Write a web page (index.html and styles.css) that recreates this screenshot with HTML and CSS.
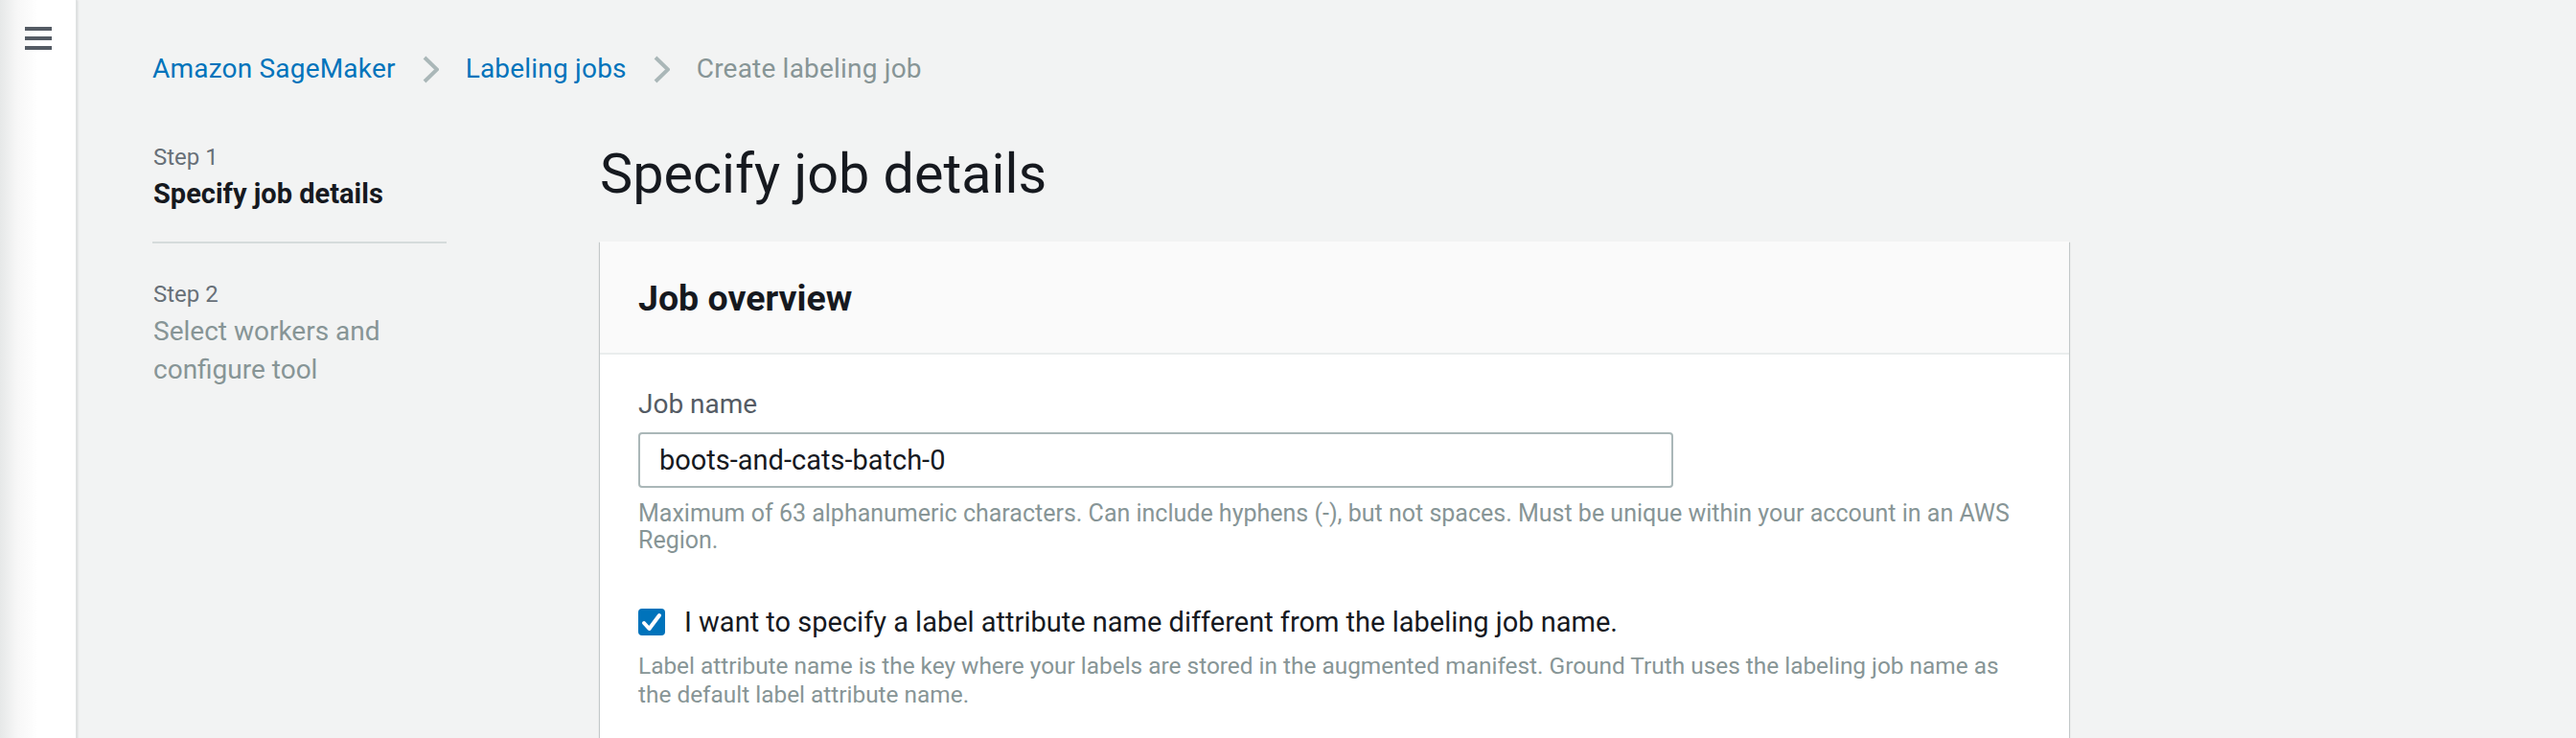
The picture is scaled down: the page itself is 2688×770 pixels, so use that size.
FILE: index.html
```html
<!DOCTYPE html>
<html lang="en">
<head>
<meta charset="utf-8">
<title>Create labeling job</title>
<link rel="stylesheet" href="styles.css">
</head>
<body>
<div class="app">
  <aside class="sidenav">
    <svg class="menu-icon" width="28" height="24" viewBox="0 0 28 24" aria-label="Menu">
      <rect x="0" y="0" width="28" height="4" fill="#545b64"/>
      <rect x="0" y="10" width="28" height="4" fill="#545b64"/>
      <rect x="0" y="20" width="28" height="4" fill="#545b64"/>
    </svg>
  </aside>
  <main class="main">
    <nav class="breadcrumbs">
      <a class="crumb-link" href="#">Amazon SageMaker</a>
      <svg class="crumb-sep" width="17" height="29" viewBox="0 0 17 29"><polyline points="2,2 15,14.5 2,27" fill="none" stroke="#aab7b8" stroke-width="4"/></svg>
      <a class="crumb-link" href="#">Labeling jobs</a>
      <svg class="crumb-sep" width="17" height="29" viewBox="0 0 17 29"><polyline points="2,2 15,14.5 2,27" fill="none" stroke="#aab7b8" stroke-width="4"/></svg>
      <span class="crumb-current">Create labeling job</span>
    </nav>
    <div class="layout">
      <ol class="steps">
        <li class="step step-active">
          <div class="step-label">Step 1</div>
          <div class="step-title">Specify job details</div>
        </li>
        <li class="step">
          <div class="step-label">Step 2</div>
          <div class="step-title step-title-disabled">Select workers and<br>configure tool</div>
        </li>
      </ol>
      <section class="content">
        <h1 class="page-title">Specify job details</h1>
        <div class="card">
          <div class="card-header">
            <h2 class="card-title">Job overview</h2>
          </div>
          <div class="card-body">
            <div class="field">
              <label class="field-label" for="jobname">Job name</label>
              <div class="input">boots-and-cats-batch-0</div>
              <p class="help">Maximum of 63 alphanumeric characters. Can include hyphens (-), but not spaces. Must be unique within your account in an AWS Region.</p>
            </div>
            <div class="check-field">
              <div class="check-row">
                <span class="checkbox">
                  <svg width="28" height="28" viewBox="0 0 28 28"><polyline points="6,15 11.5,21 22,7" fill="none" stroke="#fff" stroke-width="4" stroke-linecap="round" stroke-linejoin="round"/></svg>
                </span>
                <span class="check-label">I want to specify a label attribute name different from the labeling job name.</span>
              </div>
              <p class="help help-check">Label attribute name is the key where your labels are stored in the augmented manifest. Ground Truth uses the labeling job name as the default label attribute name.</p>
            </div>
          </div>
        </div>
      </section>
    </div>
  </main>
</div>
</body>
</html>
```
FILE: styles.css
```css
* { box-sizing: border-box; }
html, body {
  margin: 0;
  padding: 0;
  height: 100%;
}
body {
  background: #f2f3f3;
  font-family: Roboto, "Liberation Sans", Arial, sans-serif;
  color: #16191f;
  overflow: hidden;
}
.app {
  display: flex;
  min-height: 770px;
}
.sidenav {
  width: 80px;
  flex: 0 0 80px;
  min-height: 770px;
  background: linear-gradient(90deg, #e6e8e8 0, #f7f7f7 18px, #fff 40px);
  border-right: 1px solid #dfe2e2;
  box-shadow: 1px 0 2px rgba(0, 28, 36, 0.12);
  padding: 28px 0 0 26px;
}
.menu-icon { display: block; }
.main {
  flex: 1;
  padding: 52px 0 0 79px;
}
.breadcrumbs {
  display: flex;
  align-items: center;
  gap: 28px;
  font-size: 28px;
  letter-spacing: 0.2px;
  line-height: 40px;
  height: 40px;
}
.crumb-link {
  color: #0073bb;
  text-decoration: none;
}
.crumb-sep { display: block; }
.crumb-current { color: #879596; }
.layout {
  display: grid;
  grid-template-columns: 307px 1533px;
  column-gap: 160px;
  margin-top: 56px;
}
.steps {
  list-style: none;
  margin: 0;
  padding: 0;
}
.step {
  padding: 0 0 0 1px;
}
.step-active {
  padding-bottom: 30px;
  border-bottom: 2px solid #d5dbdb;
  margin-bottom: 37px;
}
.step-label {
  font-size: 24px;
  line-height: 32px;
  color: #687078;
  margin-bottom: 2px;
}
.step-title {
  font-size: 29px;
  line-height: 40px;
  font-weight: 700;
  color: #16191f;
}
.step-title-disabled {
  font-size: 28px;
  font-weight: 400;
  color: #879596;
  line-height: 40px;
  padding-top: 1px;
}
.content { min-width: 0; }
.page-title {
  margin: 2px 0 38px 0;
  font-size: 57.5px;
  line-height: 64px;
  font-weight: 400;
  color: #16191f;
}
.card {
  background: #fff;
  box-shadow: 0 1px 1px 0 rgba(0, 28, 36, 0.3), 1px 1px 1px 0 rgba(0, 28, 36, 0.15), -1px 1px 1px 0 rgba(0, 28, 36, 0.15);
}
.card-header {
  background: #fafafa;
  border-bottom: 2px solid #eaeded;
  height: 118px;
  padding: 37px 40px 0 40px;
}
.card-title {
  margin: 0;
  font-size: 37.5px;
  line-height: 44px;
  font-weight: 700;
  color: #16191f;
}
.card-body {
  padding: 32px 40px 40px 40px;
}
.field-label {
  display: block;
  font-size: 28px;
  line-height: 40px;
  color: #545b64;
}
.input {
  margin-top: 9px;
  width: 1080px;
  height: 58px;
  border: 2px solid #aab7b8;
  border-radius: 4px;
  padding: 0 20px;
  font-size: 29px;
  line-height: 54px;
  color: #16191f;
}
.help {
  margin: 13px 0 0 0;
  font-size: 25px;
  line-height: 28px;
  color: #879596;
}
.check-field {
  margin-top: 51px;
}
.check-row {
  display: flex;
  align-items: center;
  gap: 20px;
}
.checkbox {
  width: 28px;
  height: 28px;
  flex: 0 0 28px;
  background: #0073bb;
  border-radius: 4px;
}
.checkbox svg { display: block; }
.check-label {
  font-size: 29px;
  line-height: 40px;
  color: #16191f;
}
.help-check {
  margin-top: 11px;
  font-size: 24.4px;
  line-height: 30px;
}
```
